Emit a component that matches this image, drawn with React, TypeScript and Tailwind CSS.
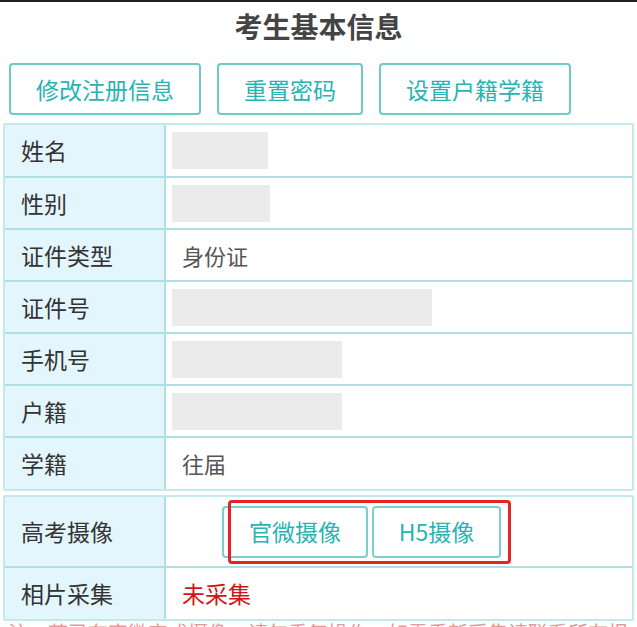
import React from 'react';

const font = { fontFamily: '"Noto Sans CJK SC", "Noto Sans", sans-serif' };

const rows: { label: string; value?: string; blank?: number }[] = [
  { label: '姓名', blank: 96 },
  { label: '性别', blank: 98 },
  { label: '证件类型', value: '身份证' },
  { label: '证件号', blank: 260 },
  { label: '手机号', blank: 170 },
  { label: '户籍', blank: 170 },
  { label: '学籍', value: '往届' },
];

const topButtons = ['修改注册信息', '重置密码', '设置户籍学籍'];

const App: React.FC = () => {
  return (
    <div className="w-[637px] h-[627px] overflow-hidden bg-white" style={font}>
      <div className="h-[2px] bg-[#222]"></div>

      <h1 className="text-center text-[28px] font-bold text-[#444] leading-[44px] mt-[2px]">考生基本信息</h1>

      {/* Action buttons */}
      <div className="flex gap-[16px] pl-[9px] mt-[15px]">
        {topButtons.map((t) => (
          <button
            key={t}
            className="h-[52px] px-[25px] border-2 border-[#6ccaca] rounded-[4px] text-[#2ab3b3] text-[23px] leading-none bg-white"
          >
            {t}
          </button>
        ))}
      </div>

      {/* Basic info table */}
      <div className="mx-[3px] mt-[8px] border-2 border-[#c2e9eb] rounded-[2px]">
        <table className="w-full border-collapse">
          <tbody>
            {rows.map((r, i) => (
              <tr key={r.label} className={i > 0 ? 'border-t-2 border-[#b0dfe2]' : ''}>
                <td className="w-[160px] h-[52px] bg-[#e4f6fd] border-r-2 border-[#b0dfe2] pl-[16px] text-[23px] text-[#333]">
                  {r.label}
                </td>
                <td className="pl-[16px] text-[22px] text-[#555]">
                  {r.blank ? (
                    <div className="h-[37px] bg-[#ebebeb] -ml-[10px]" style={{ width: r.blank }}></div>
                  ) : (
                    r.value
                  )}
                </td>
              </tr>
            ))}
          </tbody>
        </table>
      </div>

      {/* Photo table */}
      <div className="mx-[3px] mt-[4px] border-2 border-[#c2e9eb] rounded-[2px]">
        <table className="w-full border-collapse">
          <tbody>
            <tr>
              <td className="w-[160px] h-[70px] bg-[#e4f6fd] border-r-2 border-[#b0dfe2] pl-[16px] text-[23px] text-[#333]">
                高考摄像
              </td>
              <td className="pl-[56px]">
                <div className="relative inline-flex gap-[4px]">
                  <button className="h-[52px] w-[146px] border-2 border-[#7ccfcf] rounded-[4px] text-[#2ab3b3] text-[23px] leading-none bg-white">
                    官微摄像
                  </button>
                  <button className="h-[52px] w-[129px] border-2 border-[#7ccfcf] rounded-[4px] text-[#2ab3b3] text-[23px] leading-none bg-white">
                    H5摄像
                  </button>
                  <div className="absolute left-[6px] -top-[6px] -right-[10px] -bottom-[6px] border-[3px] border-[#e52424] rounded-[4px] pointer-events-none"></div>
                </div>
              </td>
            </tr>
            <tr className="border-t-2 border-[#b0dfe2]">
              <td className="w-[160px] h-[52px] bg-[#e4f6fd] border-r-2 border-[#b0dfe2] pl-[16px] text-[23px] text-[#333]">
                相片采集
              </td>
              <td className="pl-[16px] text-[23px] text-[#d01515]">未采集</td>
            </tr>
          </tbody>
        </table>
      </div>

      <p className="px-[8px] mt-0 text-[20px] leading-[24px] text-[#e25555] opacity-60">
        注：若已在官微完成摄像，请勿重复操作；如需重新采集请联系所在报名点工作人员处理。
      </p>
    </div>
  );
};

export default App;
